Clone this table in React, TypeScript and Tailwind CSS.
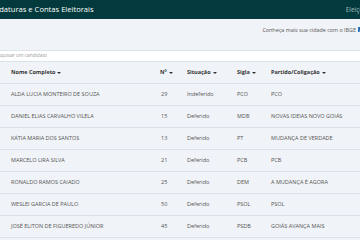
import React from "react";

const rows = [
  ["ALDA LUCIA MONTEIRO DE SOUZA", "29", "Indeferido", "PCO", "PCO"],
  ["DANIEL ELIAS CARVALHO VILELA", "15", "Deferido", "MDB", "NOVAS IDEIAS NOVO GOIÁS"],
  ["KÁTIA MARIA DOS SANTOS", "13", "Deferido", "PT", "MUDANÇA DE VERDADE"],
  ["MARCELO LIRA SILVA", "21", "Deferido", "PCB", "PCB"],
  ["RONALDO RAMOS CAIADO", "25", "Deferido", "DEM", "A MUDANÇA É AGORA"],
  ["WESLEI GARCIA DE PAULO", "50", "Deferido", "PSOL", "PSOL"],
  ["JOSÉ ELITON DE FIGUEREDO JÚNIOR", "45", "Deferido", "PSDB", "GOIÁS AVANÇA MAIS"],
];

const Caret = () => (
  <span className="inline-block w-0 h-0 ml-[2px] align-middle border-x-[2px] border-t-[2px] border-x-transparent border-t-[#333]" />
);

export default function App() {
  const grid = "grid grid-cols-[149px_27px_50px_34px_1fr] pl-[11px] items-center";
  return (
    <div
      className="w-[360px] h-[240px] overflow-hidden bg-[#f0f3f7] text-[#555]"
      style={{ fontFamily: '"Open Sans", "Liberation Sans", sans-serif' }}
    >
      <div className="h-[19px] bg-[#033a3d] flex items-center whitespace-nowrap overflow-hidden">
        <span className="-ml-[21px] text-[7.6px] text-white">Candidaturas e Contas Eleitorais</span>
        <span className="ml-auto -mr-[10px] text-[6.5px] text-[#a6bcbd] shrink-0">Eleições</span>
      </div>
      <div className="h-[31px] flex justify-end items-start pt-[7px] whitespace-nowrap overflow-hidden">
        <span className="text-[5.4px] text-[#555]">Conheça mais sua cidade com o IBGE</span>
        <span className="ml-[2px] -mr-[3px] mt-[1px] w-[5px] h-[5px] bg-[#2b6fb8] shrink-0 flex items-center justify-center">
          <svg width="4" height="4" viewBox="0 0 4 4">
            <path d="M0.5 3.2 L3.2 1" stroke="white" strokeWidth="0.8" />
          </svg>
        </span>
      </div>
      <div className="h-[12px] bg-white border-y border-[#dde2e8] flex items-center overflow-hidden whitespace-nowrap">
        <span className="-ml-[7px] text-[4.8px] text-[#9a9a9a]">Pesquisar um candidato</span>
      </div>
      <div className={`${grid} h-[22px] border-b border-[#dde2e8] text-[5.5px] font-bold text-[#333] whitespace-nowrap`}>
        <span>Nome Completo<Caret /></span>
        <span>Nº<Caret /></span>
        <span>Situação<Caret /></span>
        <span>Sigla<Caret /></span>
        <span>Partido/Coligação<Caret /></span>
      </div>
      {rows.map((r, i) => (
        <div key={i} className={`${grid} h-[22px] border-b border-[#dde2e8] text-[5.5px] whitespace-nowrap`}>
          <span>{r[0]}</span>
          <span className="pl-[1px]">{r[1]}</span>
          <span>{r[2]}</span>
          <span>{r[3]}</span>
          <span>{r[4]}</span>
        </div>
      ))}
    </div>
  );
}
